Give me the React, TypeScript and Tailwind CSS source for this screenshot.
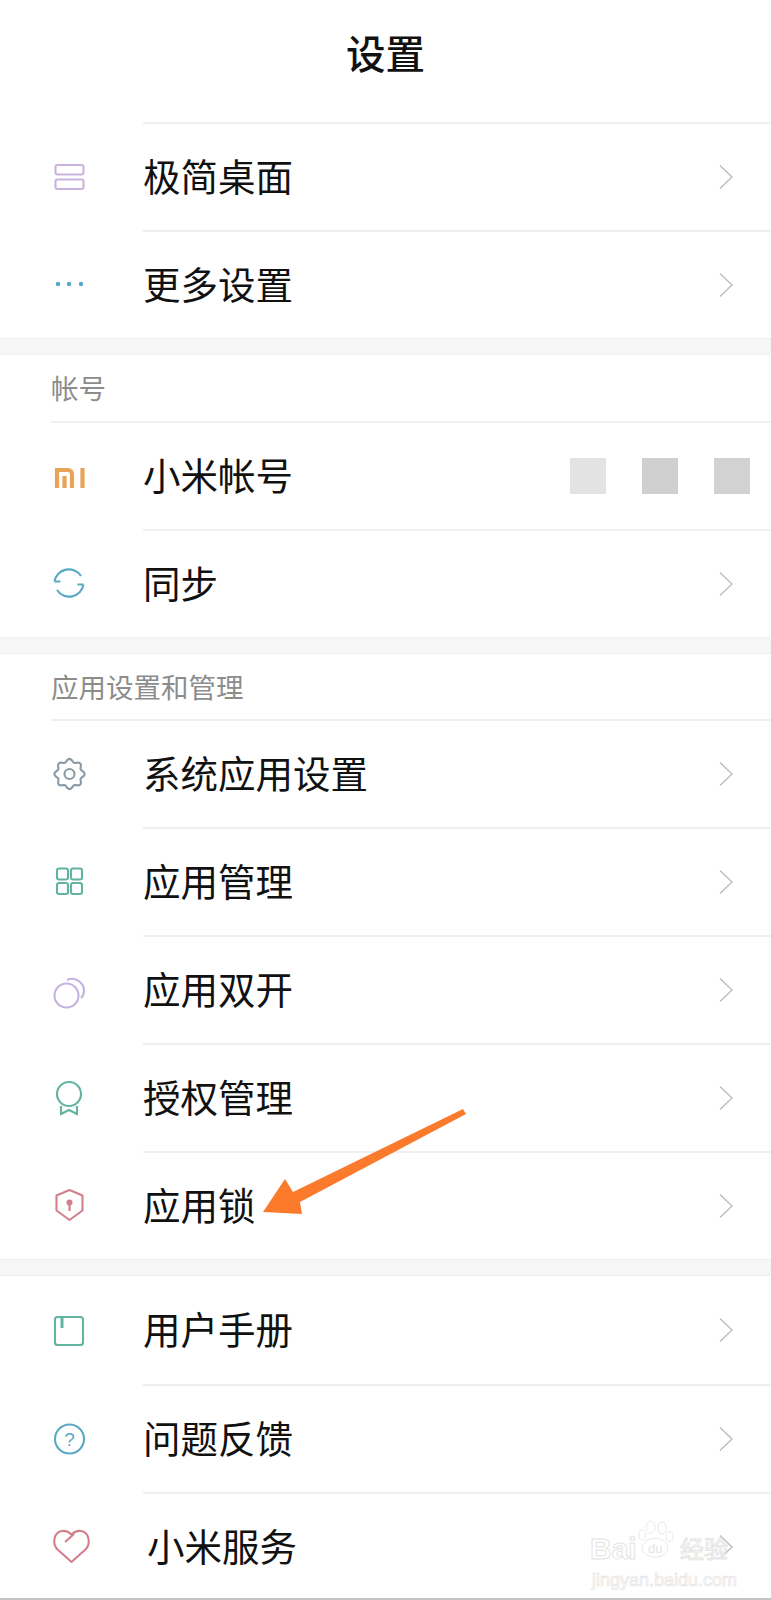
import type { ReactNode } from 'react';

const cjk = 'font-["Noto_Sans_CJK_SC","Noto_Sans",sans-serif]';

function Icon({ children }: { children: ReactNode }) {
    return (
        <svg viewBox="0 0 40 40" fill="none" strokeWidth="2.100" className="w-10 h-10 overflow-visible">
            {children}
        </svg>
    );
}

// eight rounded lobes around the centre
const gearPath =
    Array.from({ length: 96 }, (_, i) => {
        const a = (i / 96) * Math.PI * 2;
        const r = 13.6 + 1.5 * Math.cos(8 * a);
        return `${i === 0 ? 'M' : 'L'}${(20.5 + r * Math.cos(a)).toFixed(2)} ${(20 + r * Math.sin(a)).toFixed(2)}`;
    }).join('') + 'z';

const Minimal = (
    <Icon>
        <rect x="6.500" y="9" width="28" height="9.500" rx="2" stroke="#c9b3dd" />
        <rect x="6.500" y="23.500" width="28" height="9.500" rx="2" stroke="#c9b3dd" />
    </Icon>
);
const More = (
    <Icon>
        <circle cx="9" cy="20" r="2.200" fill="#55a5c5" />
        <circle cx="20" cy="20" r="2.200" fill="#55a5c5" />
        <circle cx="32" cy="20" r="2.200" fill="#55a5c5" />
    </Icon>
);
const Mi = (
    <Icon>
        <path d="M8 32V14h11a4 4 0 0 1 4 4v14M15.500 32V20" stroke="#e8a357" strokeWidth="4.200" />
        <path d="M33.500 12v20" stroke="#e8a357" strokeWidth="4.200" />
    </Icon>
);
const Sync = (
    <Icon>
        <path d="M5.500 18.500A14.500 14.500 0 0 1 32 13M34.500 21.500A14.500 14.500 0 0 1 8 27M5.500 18.500h6M34.500 21.500h-6" stroke="#5aa9c4" />
    </Icon>
);
const Gear = (
    <Icon>
        <path d={gearPath} stroke="#8a9aa5" strokeLinejoin="round" />
        <circle cx="20.500" cy="20" r="5" stroke="#8a9aa5" />
    </Icon>
);
const Grid = (
    <Icon>
        <rect x="8" y="7.500" width="11" height="11" rx="2" stroke="#62b3a2" />
        <rect x="22" y="7.500" width="11" height="11" rx="2" stroke="#62b3a2" />
        <rect x="8" y="22" width="11" height="11" rx="2" stroke="#62b3a2" />
        <rect x="22" y="22" width="11" height="11" rx="2" stroke="#62b3a2" />
    </Icon>
);
const Dual = (
    <Icon>
        <circle cx="17.500" cy="26.500" r="12" stroke="#c4b2e0" />
        <path d="M18 11a12 12 0 0 1 17 11c0 3-1 5-3 7" stroke="#c4b2e0" />
    </Icon>
);
const Medal = (
    <Icon>
        <circle cx="20" cy="17" r="12" stroke="#62b3a2" />
        <path d="M12 29v8l8-4 8 4v-8" stroke="#62b3a2" />
    </Icon>
);
const Shield = (
    <Icon>
        <path d="M20.500 5l13 5.500v15L20.500 35 7.500 25.500v-15z" stroke="#d17f8c" strokeLinejoin="round" />
        <circle cx="20.500" cy="17.500" r="3" fill="#d17f8c" />
        <path d="M20.500 18v8" stroke="#d17f8c" strokeWidth="2.200" />
    </Icon>
);
const Book = (
    <Icon>
        <rect x="6" y="7" width="28" height="28" rx="2.500" stroke="#62b3a2" />
        <path d="M13 7v11" stroke="#62b3a2" strokeWidth="3" />
    </Icon>
);
const Help = (
    <Icon>
        <circle cx="20.500" cy="21" r="14.500" stroke="#5aa9c4" />
        <text x="20.500" y="28" textAnchor="middle" fontSize="19" fill="#5aa9c4" fontFamily="Liberation Sans, sans-serif">?</text>
    </Icon>
);
const Heart = (
    <Icon>
        <path
            d="M22.500 36L8 23C3 17 5 6 13 5c4-.5 7 1 9.500 3.500C25 6 28 4.500 32 5c8 1 10 12 5 18zM16 16l9-8"
            stroke="#d17f8c"
            strokeLinejoin="round"
        />
    </Icon>
);

function Chevron() {
    return (
        <svg viewBox="0 0 14 24" fill="none" className="w-3.5 h-6">
            <path d="M1 0.500L13 12 1 23.500" stroke="#bdbdbd" strokeWidth="1.400" />
        </svg>
    );
}

interface RowProps {
    icon: ReactNode;
    label: string;
    first?: boolean;
    tight?: boolean;
    right?: ReactNode;
    shift?: boolean;
}

function Row({ icon, label, first, tight, right, shift }: RowProps) {
    return (
        <div className={`flex ${tight ? 'h-[106px]' : 'h-[108px]'}`}>
            <div className="w-[143px] shrink-0 flex items-center pl-[49px]">{icon}</div>
            <div className={`flex-1 flex items-center justify-between ${first ? '' : 'border-t-2 border-[#efefef]'} ${right ? 'pr-[21px]' : 'pr-[38px]'}`}>
                <span className={`text-[37.500px] leading-none text-[#111] pb-1 ${shift ? 'pl-1' : ''}`}>{label}</span>
                {right ?? <Chevron />}
            </div>
        </div>
    );
}

function Band() {
    return <div className="h-[17px] bg-[#f6f6f6] border-y border-[#efefef]" />;
}

function Header({ label }: { label: string }) {
    return (
        <div className="ml-[51px] h-[67.500px] flex items-center border-b-2 border-[#efefef]">
            <span className="text-[27.500px] leading-none text-[#8c8c8c]">{label}</span>
        </div>
    );
}

export default function App() {
    return (
        <div className={`relative w-[771px] h-[1600px] bg-white overflow-hidden ${cjk}`}>
            <div className="h-[122px] flex justify-center pt-[31px]">
                <h1 className="text-[39.500px] leading-[42px] font-medium text-[#111]">设置</h1>
            </div>
            <Row icon={Minimal} label="极简桌面" />
            <Row icon={More} label="更多设置" />
            <Band />
            <Header label="帐号" />
            <Row
                icon={Mi}
                label="小米帐号"
                first
                tight
                right={
                    <div className="flex gap-9">
                        <div className="w-9 h-9 bg-[#e3e3e3]" />
                        <div className="w-9 h-9 bg-[#cfcfcf]" />
                        <div className="w-9 h-9 bg-[#d2d2d2]" />
                    </div>
                }
            />
            <Row icon={Sync} label="同步" />
            <Band />
            <Header label="应用设置和管理" />
            <Row icon={Gear} label="系统应用设置" first tight />
            <Row icon={Grid} label="应用管理" />
            <Row icon={Dual} label="应用双开" />
            <Row icon={Medal} label="授权管理" />
            <Row icon={Shield} label="应用锁" />
            <Band />
            <Row icon={Book} label="用户手册" first />
            <Row icon={Help} label="问题反馈" />
            <Row icon={Heart} label="小米服务" shift />

            {/* annotation arrow on top of the screenshot */}
            <svg viewBox="0 0 771 1600" className="absolute inset-0 w-[771px] h-[1600px] pointer-events-none">
                <path d="M463 1109L466 1114 300 1202 302 1214 263 1212 285 1179 293 1192z" fill="#fb7a2c" />
            </svg>

            {/* baidu watermark */}
            <div className="absolute left-[590px] top-[1515px] w-[180px] h-[70px] pointer-events-none">
                <span className="absolute left-0 top-[19px] font-['Liberation_Sans',sans-serif] font-bold text-[30px] leading-none text-white [-webkit-text-stroke:1px_#e4e4e4]">Bai</span>
                <svg viewBox="0 0 50 50" fill="none" stroke="#e4e4e4" className="absolute left-[47px] top-[3px] w-[43px] h-[44px]">
                    <ellipse cx="16" cy="10" rx="5" ry="7" />
                    <ellipse cx="29" cy="11" rx="5" ry="7" />
                    <ellipse cx="6" cy="19" rx="4" ry="6" />
                    <ellipse cx="38" cy="21" rx="4" ry="6" />
                    <ellipse cx="21" cy="34" rx="15" ry="11" />
                </svg>
                <span className="absolute left-[58px] top-[27px] font-['Liberation_Sans',sans-serif] text-[13px] leading-none text-[#e4e4e4]">du</span>
                <span className="absolute left-[90px] top-[21px] text-[24px] leading-none text-white [-webkit-text-stroke:1px_#e4e4e4]">经验</span>
                <span className="absolute left-[2px] top-[56px] font-['Liberation_Sans',sans-serif] text-[18px] leading-none text-white [-webkit-text-stroke:0.7px_#e4e4e4]">jingyan.baidu.com</span>
            </div>
            <div className="absolute left-0 right-0 bottom-0 h-0.5 bg-[#c4c4c4]" />
        </div>
    );
}
